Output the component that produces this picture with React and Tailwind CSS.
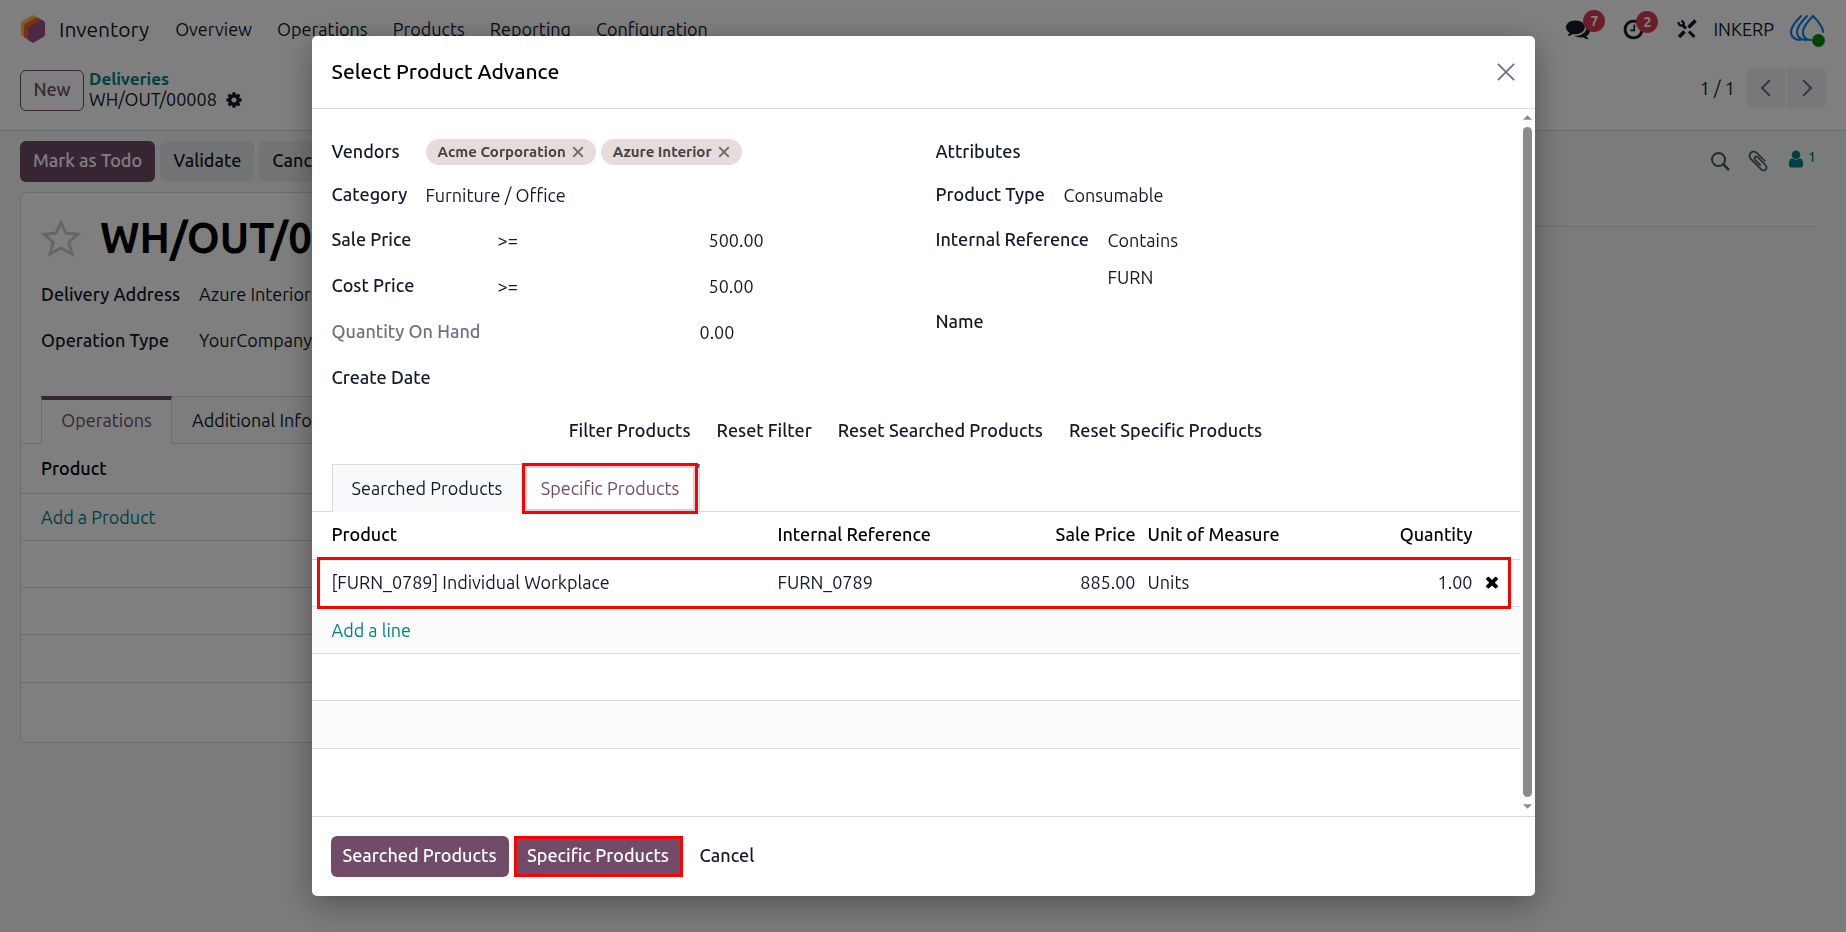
import { useState } from 'react'

const NAV_ITEMS = ['Overview', 'Operations', 'Products', 'Reporting', 'Configuration']
const VENDORS = ['Acme Corporation', 'Azure Interior']
const FILTER_ACTIONS = ['Filter Products', 'Reset Filter', 'Reset Searched Products', 'Reset Specific Products']

const ICONS = {
  cog: 'M1152 896q0-106-75-181t-181-75-181 75-75 181 75 181 181 75 181-75 75-181zm512-109v222q0 12-8 23t-20 13l-185 28q-19 54-39 91 35 50 107 138 10 12 10 25t-9 23q-27 37-99 108t-94 71q-12 0-26-9l-138-108q-44 23-91 38-16 136-29 186-7 28-36 28h-222q-14 0-24.5-8.5t-11.5-21.5l-28-184q-49-16-90-37l-141 107q-10 9-25 9-14 0-25-11-126-114-165-168-7-10-7-23 0-12 8-23 15-21 51-66.5t54-70.5q-27-50-41-99l-183-27q-13-2-21-12.5t-8-23.5v-222q0-12 8-23t19-13l186-28q14-46 39-92-40-57-107-138-10-12-10-24 0-10 9-23 26-36 98.5-107.5t94.5-71.5q13 0 26 10l138 107q44-23 91-38 16-136 29-186 7-28 36-28h222q14 0 24.5 8.5t11.5 21.5l28 184q49 16 90 37l142-107q9-9 24-9 13 0 25 10 129 119 165 170 7 8 7 22 0 12-8 23-15 21-51 66.5t-54 70.5q26 50 41 98l183 28q13 2 21 12.5t8 23.5z',
  comments: 'M1408 768q0 139-94 257t-256.5 186.5-353.5 68.5q-86 0-176-16-124 88-278 128-36 9-86 16h-3q-11 0-20.5-8t-11.5-21q-1-3-1-6.5t.5-6.5 2-6l2.5-5 3.5-5.5 4-5 4.5-5 4-4.5q5-6 23-25t26-29.5 22.5-29 25-38.5 20.5-44q-124-72-195-177t-71-224q0-139 94-257t256.5-186.5 353.5-68.5 353.5 68.5 256.5 186.5 94 257zm384 256q0 120-71 224.5t-195 176.5q10 24 20.5 44t25 38.5 22.5 29 26 29.5 23 25q1 1 4 4.5t4.5 5 4 5 3.5 5.5l2.5 5 2 6 .5 6.5-1 6.5q-3 14-13 22t-22 7q-50-7-86-16-154-40-278-128-90 16-176 16-271 0-472-132 58 4 88 4 161 0 309-45t264-129q125-92 192-212t67-254q0-77-23-152 129 71 204 178t75 230z',
  clock: 'M1024 544v448q0 14-9 23t-23 9h-320q-14 0-23-9t-9-23v-64q0-14 9-23t23-9h224v-352q0-14 9-23t23-9h64q14 0 23 9t9 23zm416 352q0-148-73-273t-198-198-273-73-273 73-198 198-73 273 73 273 198 198 273 73 273-73 198-198 73-273zm224 0q0 209-103 385.5t-279.5 279.5-385.5 103-385.5-103-279.5-279.5-103-385.5 103-385.5 279.5-279.5 385.5-103 385.5 103 279.5 279.5 103 385.5z',
  times: 'M1490 1322q0 40-28 68l-136 136q-28 28-68 28t-68-28l-294-294-294 294q-28 28-68 28t-68-28l-136-136q-28-28-28-68t28-68l294-294-294-294q-28-28-28-68t28-68l136-136q28-28 68-28t68 28l294 294 294-294q28-28 68-28t68 28l136 136q28 28 28 68t-28 68l-294 294 294 294q28 28 28 68z',
  user: 'M1536 1399q0 109-62.5 187t-150.5 78h-854q-88 0-150.5-78t-62.5-187q0-85 8.5-160.5t31.5-152 58.5-131 94-89 134.5-34.5q131 128 313 128t313-128q76 0 134.5 34.5t94 89 58.5 131 31.5 152 8.5 160.5zm-256-887q0 159-112.5 271.5t-271.5 112.5-271.5-112.5-112.5-271.5 112.5-271.5 271.5-112.5 271.5 112.5 112.5 271.5z',
  paperclip: 'M1596 1385q0 117-79 196t-196 79q-135 0-235-100l-777-776q-113-115-113-271 0-159 110-270t269-111q158 0 273 113l605 606q10 10 10 22 0 16-30.5 46.5t-46.5 30.5q-13 0-23-10l-606-607q-79-77-181-77-106 0-179 75t-73 181q0 105 76 181l776 777q63 63 145 63 64 0 106-42t42-106q0-82-63-145l-581-581q-26-24-60-24-29 0-48 19t-19 48q0 32 25 59l410 410q10 10 10 22 0 16-31 47t-47 31q-12 0-22-10l-410-410q-63-61-63-149 0-82 57-139t139-57q88 0 149 63l581 581q100 98 100 235z',
}

function Icon({ name, className }) {
  return (
    <svg viewBox="0 0 1792 1792" fill="currentColor" className={className} aria-hidden="true">
      <path d={ICONS[name]} />
    </svg>
  )
}

function LineIcon({ d, className, strokeWidth = 2 }) {
  return (
    <svg viewBox="0 0 20 20" fill="none" stroke="currentColor" strokeWidth={strokeWidth} className={className} aria-hidden="true">
      <path d={d} />
    </svg>
  )
}

function AppLogo() {
  return (
    <svg viewBox="0 0 24 28" className="h-7 w-6" aria-hidden="true">
      <path d="M12 0 22 5.5 3 22 1.2 21Q0 20.300 0 19V8.500Q0 7 1.300 6.200Z" fill="#fbb945" />
      <path d="M16 2.200 22.500 6 7.500 25 4 23Q3 22.300 3 21V11Q3 9.500 4.300 8.700Z" fill="#f86126" />
      <path d="M20.500 4.800 22.800 6.200Q24 7 24 8.300V19.500Q24 21 22.700 21.800L13 27.400Q12 28 11 27.400L7 25V13.500Q7 12.200 8.200 11.500Z" fill="#985184" />
    </svg>
  )
}

function ToolsIcon() {
  return (
    <svg viewBox="0 0 20 20" fill="none" stroke="currentColor" className="h-5 w-5" aria-hidden="true">
      <path d="M5 5.500 9 9.500M12 12.500 17.500 18" strokeWidth="3" />
      <path d="M1.500 3Q1.500 7 5.500 6.500Q7.500 5.500 6.500 3.500L4.500 1.500" strokeWidth="2.200" />
      <path d="M18.500 1.500 11.500 8.500" strokeWidth="3.600" />
      <path d="M7.500 12.500 2 18" strokeWidth="3.600" />
    </svg>
  )
}

function Avatar() {
  return (
    <span className="relative block h-8 w-9">
      <svg viewBox="0 0 36 32" fill="none" stroke="#0b7df0" strokeWidth="2" strokeLinecap="round" className="h-8 w-9" aria-hidden="true">
        <path d="M11 3C6 8 1 14 1 19C1 24 5 27 10 27" />
        <path d="M17 3C12 8 7 14 7 19C7 24 11 27 16 27" />
        <path d="M21 27C16 27 13 24 13 19C13 14 18 8 23 3C28 8 33 14 33 19" />
      </svg>
      <span className="absolute right-px -bottom-0.5 h-[13px] w-[13px] rounded-full bg-[#008a0c]" />
    </span>
  )
}

function Navbar() {
  return (
    <header className="flex h-14 items-start justify-between bg-white pt-[9px] pr-5 pl-[21px]">
      <nav className="flex h-10 items-center">
        <AppLogo />
        <a href="#inventory" className="ml-[14px] text-[21px]">Inventory</a>
        <div className="ml-[26px] flex gap-[25px] pb-px">
          {NAV_ITEMS.map((item) => (
            <a key={item} href={`#${item.toLowerCase()}`}>{item}</a>
          ))}
        </div>
      </nav>
      <div className="flex h-10 items-center">
        <button type="button" aria-label="Messages" className="relative mr-8">
          <Icon name="comments" className="h-6 w-6" />
          <span className="absolute -top-[7px] left-[17px] flex h-[22px] w-[22px] items-center justify-center rounded-full bg-[#d23f4e] text-sm font-bold text-white">7</span>
        </button>
        <button type="button" aria-label="Activities" className="relative mr-8">
          <Icon name="clock" className="h-[23px] w-[23px]" />
          <span className="absolute -top-[7px] left-[14px] flex h-[22px] w-[22px] items-center justify-center rounded-full bg-[#d23f4e] text-sm font-bold text-white">2</span>
        </button>
        <button type="button" aria-label="Developer tools">
          <ToolsIcon />
        </button>
        <a href="#account" className="mx-4 pb-px">INKERP</a>
        <Avatar />
      </div>
    </header>
  )
}

function ControlPanel() {
  return (
    <div className="flex h-[75px] items-start justify-between border-b border-[#d8dadd] bg-white px-5 pt-3">
      <div className="flex items-center gap-[5px]">
        <button type="button" className="h-[41px] w-16 rounded-md border border-[#714b67] pb-[3px] font-medium text-[#714b67]">New</button>
        <div className="pb-0.5 leading-[21px]">
          <a href="#deliveries" className="block text-[17px] font-semibold text-[#017e84]">Deliveries</a>
          <div className="flex items-center gap-2">
            <span>WH/OUT/00008</span>
            <button type="button" aria-label="Actions">
              <Icon name="cog" className="block h-[18px] w-[18px]" />
            </button>
          </div>
        </div>
      </div>
      <div className="flex items-center">
        <span className="mr-[11px]">1 / 1</span>
        <button type="button" aria-label="Previous" className="mr-0.5 flex h-10 w-[39px] items-center justify-center rounded-l-md bg-[#eff0f4] text-gray-500">
          <LineIcon d="M14 2 6 10l8 8" className="h-5 w-5" />
        </button>
        <button type="button" aria-label="Next" className="flex h-10 w-[39px] items-center justify-center rounded-r-md bg-[#eff0f4] text-gray-500">
          <LineIcon d="M6 2l8 8-8 8" className="h-5 w-5" />
        </button>
      </div>
    </div>
  )
}

function DeliveryForm() {
  return (
    <main className="flex flex-1 gap-4 px-5 pt-[10px]">
      <div className="w-[1180px]">
        <div className="flex gap-[5px] font-medium">
          <button type="button" className="h-[41px] rounded-md bg-[#714b67] px-[13px] pb-[3px] text-white">Mark as Todo</button>
          <button type="button" className="h-[41px] rounded-md bg-[#e7e9ed] px-[13px] pb-[3px]">Validate</button>
          <button type="button" className="h-[41px] rounded-md bg-[#e7e9ed] px-[13px] pb-[3px]">Cancel</button>
        </div>
        <section className="mt-[10px] rounded-md border border-[#d8dadd] bg-white">
          <div className="flex h-[78px] items-center gap-[19px] px-5 pt-3">
            <button type="button" aria-label="Favourite" className="text-[#c9ccd2]">
              <svg viewBox="0 0 40 38" fill="none" stroke="currentColor" strokeWidth="3" className="h-[38px] w-10" aria-hidden="true">
                <path d="M20 3.500 24.800 14 37 15.200 27.900 23.200 31 35 20 29 9 35 12.100 23.200 3 15.200 15.200 14Z" />
              </svg>
            </button>
            <h1 className="text-[42px] font-semibold text-black">WH/OUT/00008</h1>
          </div>
          <dl className="grid grid-cols-[158px_1fr] px-5 leading-[46px]">
            <dt className="font-medium">Delivery Address</dt>
            <dd>Azure Interior</dd>
            <dt className="font-medium">Operation Type</dt>
            <dd>YourCompany: Delivery Orders</dd>
          </dl>
          <div className="mt-[33px] flex h-12 border-b border-[#d8dadd] pl-5">
            <button type="button" className="-mb-px w-[131px] border-x border-t-4 border-x-[#d8dadd] border-t-[#714b67] bg-white pb-[5px] text-[#714b67]">Operations</button>
            <button type="button" className="border-t border-r border-[#d8dadd] bg-[#f9fafb] px-5 pb-px">Additional Info</button>
          </div>
          <table className="w-full text-left">
            <thead>
              <tr className="h-[49px] border-b border-[#d8dadd]">
                <th className="px-5 font-medium text-black">Product</th>
              </tr>
            </thead>
            <tbody>
              <tr className="h-[47px] border-b border-[#d8dadd]">
                <td className="px-5"><a href="#add-product" className="text-[#017e84]">Add a Product</a></td>
              </tr>
              {[1, 2].map((row) => (
                <tr key={row} className="h-[47px] border-b border-[#d8dadd]"><td /></tr>
              ))}
              <tr className="h-12 border-b border-[#d8dadd]"><td /></tr>
              <tr className="h-[60px]"><td /></tr>
            </tbody>
          </table>
        </section>
      </div>
      <aside className="mr-[10px] flex h-[86px] flex-1 items-start justify-end gap-4 border-b border-[#d8dadd] pt-2 text-gray-600">
        <button type="button" aria-label="Search messages" className="pt-0.5">
          <svg viewBox="0 0 20 20" fill="none" stroke="currentColor" strokeWidth="2" className="h-5 w-5" aria-hidden="true">
            <circle cx="8.500" cy="8.500" r="6.500" />
            <path d="m13 13 6 6" strokeWidth="2.500" />
          </svg>
        </button>
        <button type="button" aria-label="Attachments"><Icon name="paperclip" className="h-6 w-6" /></button>
        <button type="button" aria-label="Followers" className="flex items-start gap-0.5 text-[#017e84]">
          <Icon name="user" className="h-5 w-5" />
          <span className="text-sm leading-4 font-medium">1</span>
        </button>
      </aside>
    </main>
  )
}

function Field({ id, label, children, muted, className = 'h-[46px]' }) {
  return (
    <div className={`flex items-center ${className}`}>
      <label htmlFor={id} className={muted ? 'pb-0.5 font-medium text-[#6b7280]' : 'pb-0.5 font-medium'}>{label}</label>
      {children}
    </div>
  )
}

function Operator({ label }) {
  return (
    <select aria-label={label} className="w-[211px] appearance-none bg-transparent outline-none">
      <option>{'>='}</option>
      <option>{'<='}</option>
      <option>=</option>
    </select>
  )
}

function FilterForm() {
  return (
    <div className="grid grid-cols-2 px-5">
      <div>
        <Field label="Vendors" id="vendors" className="h-[42px] [&>label]:w-[94px]">
          <div id="vendors" className="flex gap-[5px]">
            {VENDORS.map((vendor) => (
              <span key={vendor} className="flex h-[26px] items-center gap-[6px] rounded-full bg-[#e6dcdc] px-3 text-[15px] font-semibold text-[#444]">
                {vendor}
                <button type="button" aria-label={`Remove ${vendor}`} className="text-[#666]">
                  <LineIcon d="M2 2l16 16M18 2 2 18" strokeWidth={3} className="h-3 w-3" />
                </button>
              </span>
            ))}
          </div>
        </Field>
        <Field label="Category" id="category" className="h-11 [&>label]:w-[94px]">
          <input id="category" defaultValue="Furniture / Office" className="w-64 outline-none" />
        </Field>
        <Field label="Sale Price" id="sale-price" className="h-[46px] [&>label]:w-[166px]">
          <Operator label="Sale price operator" />
          <input id="sale-price" defaultValue="500.00" className="w-24 outline-none" />
        </Field>
        <Field label="Cost Price" id="cost-price" className="h-[46px] [&>label]:w-[166px]">
          <Operator label="Cost price operator" />
          <input id="cost-price" defaultValue="50.00" className="w-24 outline-none" />
        </Field>
        <Field label="Quantity On Hand" id="on-hand" muted className="h-[46px] [&>label]:w-[368px]">
          <input id="on-hand" defaultValue="0.00" className="w-24 outline-none" />
        </Field>
        <Field label="Create Date" id="create-date">
          <input id="create-date" className="w-24 outline-none" />
        </Field>
      </div>
      <div className="pl-5">
        <Field label="Attributes" id="attributes" className="h-[42px]">
          <input id="attributes" className="w-40 outline-none" />
        </Field>
        <Field label="Product Type" id="product-type" className="h-11 [&>label]:w-32">
          <select id="product-type" className="w-64 appearance-none outline-none">
            <option>Consumable</option>
            <option>Service</option>
          </select>
        </Field>
        <Field label="Internal Reference" id="reference-operator" className="h-[46px] [&>label]:w-[172px]">
          <select id="reference-operator" className="w-64 appearance-none outline-none">
            <option>Contains</option>
          </select>
        </Field>
        <input aria-label="Internal reference value" defaultValue="FURN" className="mb-2 ml-[172px] block h-7 w-64 outline-none" />
        <Field label="Name" id="name">
          <input id="name" className="w-40 outline-none" />
        </Field>
      </div>
    </div>
  )
}

function ProductTable() {
  return (
    <div className="relative">
      <table className="w-full table-fixed text-left">
        <colgroup>
          <col className="w-[456px]" />
          <col className="w-[240px]" />
          <col className="w-[134px]" />
          <col />
          <col className="w-[120px]" />
          <col className="w-[41px]" />
        </colgroup>
        <thead>
          <tr className="h-[47px] border-b border-[#d8dadd] text-black [&>th]:pb-0.5 [&>th]:font-medium">
            <th className="pl-5">Product</th>
            <th className="pl-[10px]">Internal Reference</th>
            <th className="pr-[6px] text-right">Sale Price</th>
            <th className="pl-[6px]">Unit of Measure</th>
            <th className="pr-[6px] text-right">Quantity</th>
            <th aria-label="Remove" />
          </tr>
        </thead>
        <tbody>
          <tr className="h-[47px] border-b border-[#d8dadd] [&>td]:pb-px">
            <td className="pl-5">[FURN_0789] Individual Workplace</td>
            <td className="pl-[10px]">FURN_0789</td>
            <td className="pr-[6px] text-right">885.00</td>
            <td className="pl-[6px]">Units</td>
            <td className="pr-[6px] text-right">1.00</td>
            <td className="pl-1">
              <button type="button" aria-label="Delete row" className="block text-black">
                <Icon name="times" className="h-[18px] w-[18px]" />
              </button>
            </td>
          </tr>
          <tr className="h-[47px] border-b border-[#d8dadd] bg-[#fcfcfc]">
            <td className="pl-5" colSpan={6}><a href="#add-line" className="text-[#017e84]">Add a line</a></td>
          </tr>
          <tr className="h-[47px] border-b border-[#d8dadd]"><td colSpan={6} /></tr>
          <tr className="h-12 border-b border-[#d8dadd] bg-[#fcfcfc]"><td colSpan={6} /></tr>
        </tbody>
      </table>
      {/* row highlight */}
      <div className="pointer-events-none absolute top-[45px] right-[9px] left-[5px] h-[52px] border-3 border-[#fe0000]" />
    </div>
  )
}

function Scrollbar() {
  return (
    <div className="flex w-[15px] shrink-0 flex-col items-center justify-between bg-[#fcfcfc] pt-[6px] pb-[7px] text-[#8b8b8b]" aria-hidden="true">
      <svg viewBox="0 0 10 5" fill="currentColor" className="h-[5px] w-[9px]"><path d="M0 5 5 0l5 5z" /></svg>
      <div className="my-[7px] w-[9px] flex-1 rounded-full bg-[#8b8b8b]" />
      <svg viewBox="0 0 10 5" fill="currentColor" className="h-[5px] w-[9px]"><path d="M0 0h10L5 5z" /></svg>
    </div>
  )
}

function ProductDialog() {
  const [tab, setTab] = useState('specific')

  return (
    <div className="fixed inset-0 flex justify-center bg-black/50 py-9">
      <div
        role="dialog"
        aria-modal="true"
        aria-labelledby="dialog-title"
        className="flex w-full max-w-[1223px] flex-col overflow-hidden rounded-[5px] bg-white shadow-[0_8px_32px_rgba(0,0,0,0.35)]"
      >
        <div className="flex h-[73px] shrink-0 items-center justify-between border-b border-[#d8dadd] px-5">
          <h2 id="dialog-title" className="pb-0.5 text-[21px] font-medium text-black">Select Product Advance</h2>
          <button type="button" aria-label="Close" className="text-gray-500">
            <LineIcon d="M1 1l18 18M19 1 1 19" strokeWidth={2} className="h-[18px] w-[18px]" />
          </button>
        </div>

        <div className="flex min-h-0 flex-1">
          <div className="min-w-0 flex-1 overflow-hidden pt-[22px]">
            <FilterForm />
            <div className="mt-2 mb-[13px] flex h-[42px] justify-center font-medium">
              {FILTER_ACTIONS.map((action) => (
                <button key={action} type="button" className="px-[13px]">{action}</button>
              ))}
            </div>
            <div className="flex h-12 border-b border-[#d8dadd] pl-5">
              <button
                type="button"
                onClick={() => setTab('searched')}
                className="-mb-px w-[190px] border-t border-l border-[#d8dadd] bg-[#f9fafb] pb-0.5"
              >
                Searched Products
              </button>
              <button
                type="button"
                onClick={() => setTab('specific')}
                aria-pressed={tab === 'specific'}
                className="relative -mb-px w-[178px] border-t-4 border-r border-t-[#714b67] border-r-[#d8dadd] pb-[5px] text-[#714b67]"
              >
                Specific Products
                <span className="absolute -top-[5px] right-px -bottom-0.5 left-0 border-3 border-[#fe0000]">
                  <span className="block h-full border-2 border-[#ddd0da]" />
                </span>
              </button>
            </div>
            <ProductTable />
          </div>
          <Scrollbar />
        </div>

        <div className="flex h-20 shrink-0 items-center gap-[5px] border-t border-[#d8dadd] px-[19px] font-medium">
          <button type="button" className="h-[41px] w-[178px] rounded-md bg-[#714b67] pb-1 text-white">Searched Products</button>
          <button type="button" className="h-[41px] w-[169px] border-3 border-[#fe0000] bg-[#714b67] pb-1 text-white">Specific Products</button>
          <button type="button" className="h-[41px] px-3 pb-1">Cancel</button>
        </div>
      </div>
    </div>
  )
}

export default function App() {
  return (
    <div className="flex min-h-screen flex-col bg-[#f5f9f7] font-['Ubuntu','Noto_Sans',sans-serif] text-[18px] leading-6 text-[#111827]">
      <Navbar />
      <ControlPanel />
      <DeliveryForm />
      <ProductDialog />
    </div>
  )
}
